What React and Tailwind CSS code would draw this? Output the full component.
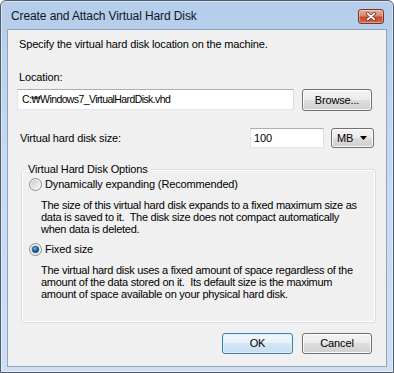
const font = "font-['Liberation_Sans','Noto_Sans_CJK_KR',sans-serif]";

function Radio({ checked }) {
  return (
    <svg width="13" height="13" viewBox="0 0 13 13" className="shrink-0">
      <defs>
        <linearGradient id={checked ? "rgc" : "rgu"} x1="0" y1="0" x2="1" y2="1">
          <stop offset="0" stopColor="#c9c9c9" />
          <stop offset="1" stopColor="#fafafa" />
        </linearGradient>
        <radialGradient id="dot" cx="0.4" cy="0.35" r="0.7">
          <stop offset="0" stopColor="#7fc2ee" />
          <stop offset="0.5" stopColor="#22679f" />
          <stop offset="1" stopColor="#143a63" />
        </radialGradient>
      </defs>
      <circle cx="6.5" cy="6.5" r="6" fill="#f3f3f3" stroke="#8b8c8d" />
      <circle cx="6.5" cy="6.5" r="4.6" fill={`url(#${checked ? "rgc" : "rgu"})`} />
      {checked && <circle cx="6.5" cy="6.5" r="3.3" fill="url(#dot)" stroke="#1d4f80" strokeWidth="0.6" />}
    </svg>
  );
}

function Button({ children, primary, className }) {
  return (
    <div
      className={`flex items-center justify-center rounded-[3px] border text-[11px] leading-[15px] ${
        primary
          ? "border-[#3c7fb1] bg-[linear-gradient(#f2f8fc_0%,#e6f1f9_50%,#d4e7f4_50%,#c5def1_100%)] shadow-[inset_0_0_0_1px_rgba(220,240,255,0.9)]"
          : "border-[#707070] bg-[linear-gradient(#f3f3f3_0%,#ebebeb_50%,#dddddd_50%,#d0d0d0_100%)] shadow-[inset_0_0_0_1px_rgba(255,255,255,0.85)]"
      } ${className}`}
    >
      {children}
    </div>
  );
}

function TextBox({ children, className }) {
  return (
    <div
      className={`flex items-center border border-t-[#abadb3] border-l-[#e2e3ea] border-r-[#dbdfe6] border-b-[#e3e9ef] bg-white leading-[15px] ${className}`}
    >
      {children}
    </div>
  );
}

export default function App() {
  return (
    <div className={`h-[373px] w-[394px] bg-white text-[11px] tracking-[-0.15px] text-black ${font}`}>
      <div className="flex h-full flex-col rounded-t-[6px] border border-[#505b6c] bg-[linear-gradient(#b5cdea,#c5d9f1_40%,#cddff4)] px-[6px] pb-[5px] shadow-[inset_0_0_0_1px_rgba(255,255,255,0.45)]">
        <div className="flex h-[28px] items-start justify-between">
          <span className="pl-[4px] pt-[8px] text-[12px] leading-[15px] tracking-[-0.1px] text-[#0c1626]">
            Create and Attach Virtual Hard Disk
          </span>
          <div className="mr-[3px] mt-[8px] flex h-[15px] w-[26px] items-center justify-center rounded-[3px] border border-[#7b3125] bg-[linear-gradient(#e9ab9d,#d88671_45%,#c44a30_55%,#d3694e)] shadow-[inset_0_0_0_1px_rgba(255,255,255,0.35)]">
            <svg width="12" height="9" viewBox="0 0 12 9">
              <path d="M2.5 1.5 L9.5 7.5 M9.5 1.5 L2.5 7.5" stroke="#6b2316" strokeWidth="3.2" strokeLinecap="round" />
              <path d="M2.5 1.5 L9.5 7.5 M9.5 1.5 L2.5 7.5" stroke="#ffffff" strokeWidth="1.7" strokeLinecap="round" />
            </svg>
          </div>
        </div>

        <div className="flex flex-1 flex-col border border-[#8ea5c1] bg-[#f0f0f0] pl-[9px] pt-[7px]">
          <p className="pl-[2px] leading-[15px]">Specify the virtual hard disk location on the machine.</p>
          <p className="mt-[18px] pl-[2px] leading-[15px]">Location:</p>
          <div className="mt-[4px] flex items-start gap-[8px]">
            <TextBox className="h-[21px] w-[277px] pl-[4px] text-[10.5px] tracking-[-0.6px]">
              C:<span className="font-['DejaVu_Sans',sans-serif] text-[9.5px]">₩</span>Windows7_VirtualHardDisk.vhd
            </TextBox>
            <Button className="h-[22px] w-[70px]">Browse...</Button>
          </div>

          <div className="mt-[17px] flex h-[20px] items-center">
            <span className="w-[233px] pl-[3px] leading-[15px]">Virtual hard disk size:</span>
            <TextBox className="h-[20px] w-[74px] pl-[3px]">100</TextBox>
            <Button className="ml-[7px] h-[20px] w-[43px] !justify-between pl-[5px] pr-[6px]">
              <span>MB</span>
              <svg width="7" height="4" viewBox="0 0 7 4">
                <path d="M0 0 H7 L3.5 4 Z" fill="#000" />
              </svg>
            </Button>
          </div>

          <fieldset className="ml-[4px] mt-[14px] w-[355px] rounded-[3px] border border-[#d5dfe5] pb-[22px] shadow-[inset_0_0_0_1px_#ffffff]">
            <legend className="ml-[3px] px-[3px] leading-[15px]">Virtual Hard Disk Options</legend>
            <div className="flex h-[15px] items-center gap-[3px] pl-[7px]">
              <Radio />
              <span className="leading-[15px]">Dynamically expanding (Recommended)</span>
            </div>
            <div className="mt-[7px] whitespace-pre pl-[19px] leading-[12px] tracking-[-0.27px]">
              <div>The size of this virtual hard disk expands to a fixed maximum size as</div>
              <div>data is saved to it.  The disk size does not compact automatically</div>
              <div>when data is deleted.</div>
            </div>
            <div className="mt-[7px] flex h-[15px] items-center gap-[3px] pl-[7px]">
              <Radio checked />
              <span className="leading-[15px]">Fixed size</span>
            </div>
            <div className="mt-[7px] whitespace-pre pl-[19px] leading-[12px] tracking-[-0.27px]">
              <div>The virtual hard disk uses a fixed amount of space regardless of the</div>
              <div>amount of the data stored on it.  Its default size is the maximum</div>
              <div>amount of space available on your physical hard disk.</div>
            </div>
          </fieldset>

          <div className="mt-[10px] flex justify-end gap-[9px] pr-[14px]">
            <Button primary className="h-[21px] w-[71px]">OK</Button>
            <Button className="h-[21px] w-[70px]">Cancel</Button>
          </div>
        </div>
      </div>
    </div>
  );
}
